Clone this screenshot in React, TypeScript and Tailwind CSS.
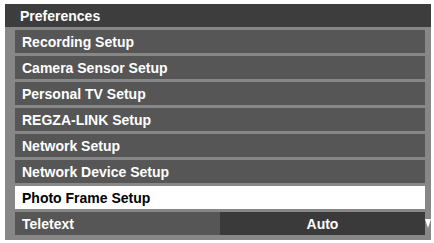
import React from "react";

const items = [
  "Recording Setup",
  "Camera Sensor Setup",
  "Personal TV Setup",
  "REGZA-LINK Setup",
  "Network Setup",
  "Network Device Setup",
  "Photo Frame Setup",
];

export default function App() {
  return (
    <div
      className="w-[434px] h-[243px] bg-white pt-[4px] pl-[5px]"
      style={{ fontFamily: '"Liberation Sans", Arial, sans-serif' }}
    >
      <div className="w-[426px] flex flex-col">
        <div className="h-[23px] bg-[#3d3d3d] pl-[15px] flex items-center text-white font-bold text-[14px] leading-none">
          Preferences
        </div>
        <div className="h-[213px] bg-[#878787] flex pt-[3px]">
          <div className="w-[10px]" />
          <div className="w-[410px] flex flex-col gap-[3px]">
            {items.map((t, i) => (
              <div
                key={t}
                className={
                  i === 6
                    ? "h-[23px] bg-white text-black pl-[7px] flex items-center font-bold text-[14px] leading-none"
                    : "h-[23px] bg-[#565656] text-white pl-[7px] flex items-center font-bold text-[14px] leading-none"
                }
              >
                {t}
              </div>
            ))}
            <div className="h-[23px] flex bg-[#565656]">
              <div className="w-[205px] pl-[7px] flex items-center text-white font-bold text-[14px] leading-none">
                Teletext
              </div>
              <div className="flex-1 bg-[#3a3a3a] flex items-center justify-center text-white font-bold text-[14px] leading-none">
                Auto
              </div>
            </div>
          </div>
          <div className="w-[6px] flex flex-col justify-end pb-[12px] items-center">
            <svg width="6" height="9" viewBox="0 0 6 9">
              <polygon points="0,0 6,0 3,9" fill="#ffffff" />
            </svg>
          </div>
        </div>
      </div>
    </div>
  );
}
